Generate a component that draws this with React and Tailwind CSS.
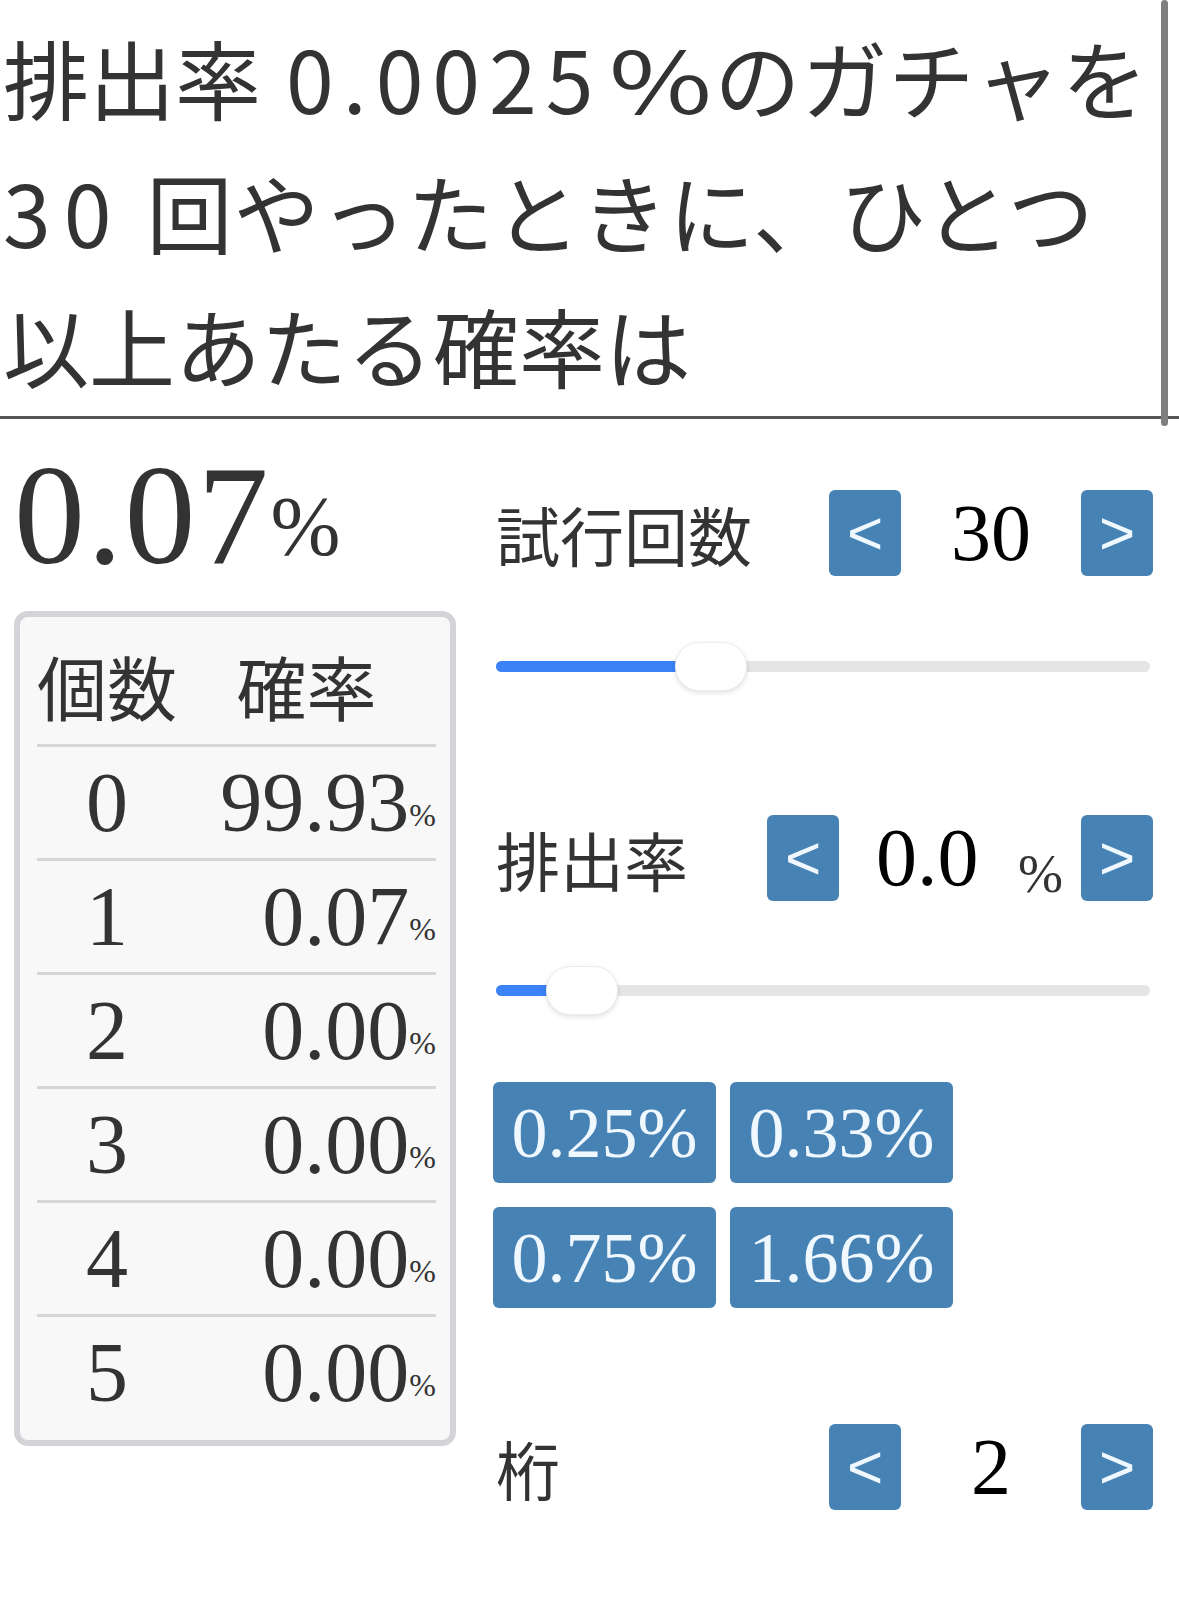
import React from "react";

const SANS = "font-['Noto_Sans_CJK_JP','Noto_Sans',sans-serif]";
const SERIF = "font-['Liberation_Serif','Noto_Sans_CJK_JP',serif]";

function StepBtn({ children }) {
  return (
    <div className="w-[72px] h-[86px] rounded-[6px] bg-[#4682b4] text-[#f0f8ff] font-['Liberation_Sans',sans-serif] text-[62px] leading-none flex items-center justify-center shrink-0">
      {children}
    </div>
  );
}

function Slider({ left }) {
  return (
    <div className="h-[49px] pt-[19px]">
      <div className="relative h-[11px] w-[654px] rounded-full bg-[#e5e5e5]">
        <div
          className="absolute left-0 top-0 h-full rounded-full bg-[#3b82f6]"
          style={{ width: left + 36 }}
        />
        <div
          className="absolute top-[-19px] w-[72px] h-[49px] rounded-[24px] bg-white border border-[#ececec] shadow-[0_2px_5px_rgba(0,0,0,0.12)]"
          style={{ left }}
        />
      </div>
    </div>
  );
}

const rows = [
  ["0", "99.93"],
  ["1", "0.07"],
  ["2", "0.00"],
  ["3", "0.00"],
  ["4", "0.00"],
  ["5", "0.00"],
];

export default function App() {
  return (
    <div className="w-[1179px] h-[1598px] bg-white overflow-hidden">
      <header
        className={`relative border-b-[3px] border-[#555555] pt-[10px] pb-[4px] pl-[3px] text-[86px] leading-[134px] text-[#333333] ${SANS}`}
      >
        <div className="whitespace-nowrap">
          排出率<span className="ml-[25px] tracking-[9px]">0.0025</span>
          <span className="ml-[4px] inline-block w-[108px] text-center">
            <span className="inline-block scale-x-[1.3]">%</span>
          </span>
          <span className="tracking-[1px]">のガチャを</span>
        </div>
        <div className="whitespace-nowrap">
          <span className="tracking-[13px]">30</span>
          <span className="ml-[22px] tracking-[1px]">回やったときに、ひとつ</span>
        </div>
        <div className="whitespace-nowrap">以上あたる確率は</div>
        <div className="absolute right-[11px] top-0 w-[7px] h-[426px] rounded-full bg-[#7f7f7f]" />
      </header>

      <div className="flex">
        {/* left column */}
        <div className="ml-[14px] w-[442px] shrink-0">
          <div
            className={`mt-[26px] h-[140px] whitespace-nowrap text-[142px] leading-[140px] tracking-[2px] text-[#333333] ${SERIF}`}
          >
            0.07<span className="text-[84px] leading-none tracking-normal align-[8px]">%</span>
          </div>

          <div className="mt-[26px] border-[6px] border-[#d4d4d8] rounded-[14px] bg-[#f8f8f8] pl-[17px] pr-[14px] pb-[12px] text-[#333333]">
            <div
              className={`h-[130px] pt-[24px] border-b-[3px] border-[#d6d6d6] grid grid-cols-[140px_1fr] items-center text-[70px] leading-none whitespace-nowrap ${SERIF}`}
            >
              <div className="text-center">個数</div>
              <div className="text-center">確率</div>
            </div>
            {rows.map(([n, v], i) => (
              <div
                key={n}
                className={`${
                  i < rows.length - 1
                    ? "h-[114px] border-b-[3px] border-[#d6d6d6]"
                    : "h-[111px]"
                } grid grid-cols-[140px_1fr] text-[84px] leading-[111px] ${SERIF}`}
              >
                <div className="text-center">{n}</div>
                <div className="text-right whitespace-nowrap">
                  {v}
                  <span className="text-[32px] leading-none align-[5px]">%</span>
                </div>
              </div>
            ))}
          </div>
        </div>

        {/* right column */}
        <div className="ml-[40px] w-[657px] shrink-0">
          {/* trials */}
          <div className="mt-[71px] h-[86px] flex items-center">
            <div className={`flex-1 text-[64px] leading-none text-[#333333] ${SANS}`}>
              試行回数
            </div>
            <StepBtn>&lt;</StepBtn>
            <div className={`w-[180px] text-center text-[80px] leading-none text-black ${SERIF}`}>
              30
            </div>
            <StepBtn>&gt;</StepBtn>
          </div>

          <div className="mt-[66px]">
            <Slider left={179} />
          </div>

          {/* rate */}
          <div className="mt-[124px] h-[86px] flex items-center">
            <div className={`flex-1 text-[64px] leading-none text-[#333333] ${SANS}`}>
              排出率
            </div>
            <StepBtn>&lt;</StepBtn>
            <div className={`w-[242px] h-full flex items-center text-black ${SERIF}`}>
              <span className="ml-[37px] text-[82px] leading-none">0.0</span>
              <span className="ml-auto mr-[18px] mt-[32px] text-[54px] leading-none text-[#333333]">
                %
              </span>
            </div>
            <StepBtn>&gt;</StepBtn>
          </div>

          <div className="mt-[65px]">
            <Slider left={50} />
          </div>

          {/* presets */}
          <div className="mt-[67px] -ml-[3px] grid grid-cols-[223px_223px] gap-x-[14px] gap-y-[24px]">
            {["0.25%", "0.33%", "0.75%", "1.66%"].map((p) => (
              <div
                key={p}
                className={`h-[101px] rounded-[6px] bg-[#4682b4] text-[#f0f8ff] text-[72px] leading-none flex items-center justify-center ${SERIF}`}
              >
                {p}
              </div>
            ))}
          </div>

          {/* digits */}
          <div className="mt-[116px] h-[86px] flex items-center">
            <div className={`flex-1 text-[64px] leading-none text-[#333333] ${SANS}`}>
              桁
            </div>
            <StepBtn>&lt;</StepBtn>
            <div className={`w-[180px] text-center text-[80px] leading-none text-black ${SERIF}`}>
              2
            </div>
            <StepBtn>&gt;</StepBtn>
          </div>
        </div>
      </div>
    </div>
  );
}
